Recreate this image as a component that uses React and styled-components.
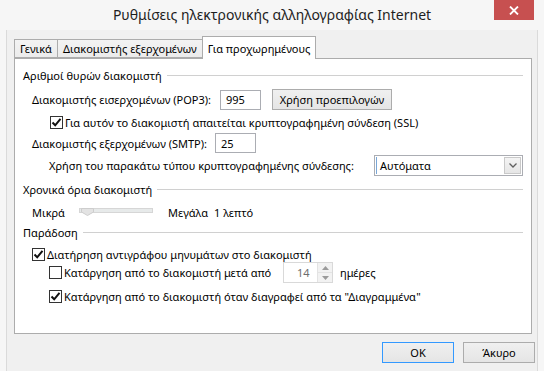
import React from 'react';
import styled, { createGlobalStyle } from 'styled-components';

const GlobalStyle = createGlobalStyle`
  html, body { margin: 0; padding: 0; }
  body {
    font-family: "Noto Sans", "Liberation Sans", sans-serif;
    font-size: 11px;
    color: #000;
    background: #f4f4f4;
  }
  * { box-sizing: border-box; }
`;

const Window = styled.div`
  width: 544px;
  height: 371px;
  display: flex;
  flex-direction: column;
  background: #f6f6f6;
  overflow: hidden;
`;

const TitleBar = styled.div`
  height: 30px;
  flex: none;
  display: grid;
  grid-template-columns: 1fr auto 1fr;
  align-items: center;
`;

const Title = styled.div`
  grid-column: 2;
  font-size: 14px;
  color: #1e1e1e;
  padding-bottom: 2px;
`;

const CloseButton = styled.div`
  grid-column: 3;
  justify-self: end;
  align-self: start;
  width: 40px;
  height: 20px;
  margin-right: 10px;
  background: #c75050;
  display: flex;
  align-items: center;
  justify-content: center;
`;

const Client = styled.div`
  flex: 1;
  margin: 0 6px;
  border-left: 1px solid #dadada;
  border-right: 1px solid #dadada;
  background: #f0f0f0;
  display: flex;
  flex-direction: column;
  padding-top: 6px;
`;

const TabArea = styled.div`
  flex: 1;
  margin: 0 5px 0 7px;
  display: flex;
  flex-direction: column;
`;

const TabStrip = styled.div`
  height: 22px;
  display: flex;
  align-items: flex-end;
`;

const Tab = styled.div`
  height: ${p => (p.$active ? 23 : 19)}px;
  margin-bottom: ${p => (p.$active ? -1 : 0)}px;
  margin-left: -1px;
  padding: 0 5px;
  display: flex;
  align-items: center;
  border: 1px solid #acacac;
  border-bottom: ${p => (p.$active ? 'none' : '1px solid #acacac')};
  background: ${p => (p.$active ? '#fff' : 'linear-gradient(#f3f3f3, #ebebeb)')};
  position: relative;
  z-index: ${p => (p.$active ? 1 : 0)};
  white-space: nowrap;
  &:first-child { margin-left: 0; }
`;

const Panel = styled.div`
  flex: 1;
  background: #fff;
  border: 1px solid #acacac;
  padding: 8px 8px 0 8px;
  display: flex;
  flex-direction: column;
`;

const GroupHeader = styled.div`
  height: 16px;
  margin-top: ${p => p.$mt || 0}px;
  display: flex;
  align-items: center;
  gap: 5px;
  white-space: nowrap;
  &::after {
    content: '';
    flex: 1;
    height: 1px;
    background: #d0d0d0;
  }
`;

const Row = styled.div`
  height: ${p => p.$h || 16}px;
  margin-top: ${p => p.$mt || 0}px;
  padding-left: ${p => p.$indent || 0}px;
  display: flex;
  align-items: center;
  white-space: nowrap;
`;

const Label = styled.span`
  flex: none;
  width: ${p => (p.$w ? `${p.$w}px` : 'auto')};
  margin-right: ${p => p.$gap || 0}px;
`;

const TextBox = styled.div`
  width: ${p => p.$w}px;
  height: 20px;
  border: 1px solid #abadb3;
  background: #fff;
  padding-left: 5px;
  display: flex;
  align-items: center;
`;

const Button = styled.div`
  width: ${p => p.$w}px;
  height: 21px;
  margin-left: ${p => p.$ml || 0}px;
  border: 1px solid ${p => (p.$default ? '#3399ff' : '#acacac')};
  background: linear-gradient(#f0f0f0, #e5e5e5);
  display: flex;
  align-items: center;
  justify-content: center;
`;

const Select = styled.div`
  width: 150px;
  height: 21px;
  border: 1px solid #abadb3;
  background: #fff;
  display: flex;
  align-items: center;
  padding: 1px;
`;

const SelectValue = styled.div`
  flex: 1;
  height: 100%;
  display: flex;
  align-items: center;
  padding-left: 3px;
  border-left: 1px solid #7aa7d6;
`;

const SelectArrow = styled.div`
  width: 17px;
  height: 17px;
  border: 1px solid #c9c9c9;
  background: linear-gradient(#f4f4f4, #e6e6e6);
  display: flex;
  align-items: center;
  justify-content: center;
`;

const CheckBoxBox = styled.div`
  width: 13px;
  height: 13px;
  flex: none;
  border: 1px solid #333;
  background: #fff;
  margin-right: 2px;
  display: flex;
  align-items: center;
  justify-content: center;
`;

const SliderTrack = styled.div`
  position: relative;
  width: 74px;
  height: 5px;
  margin: 4px 15px 0 14px;
  background: #e7eaea;
  border: 1px solid #d6d6d6;
  align-self: flex-start;
`;

const SliderThumb = styled.svg`
  position: absolute;
  left: 1px;
  top: -1px;
`;

const Spin = styled.div`
  width: 50px;
  height: 21px;
  margin: 0 7px 0 11px;
  border: 1px solid #d9d9d9;
  background: #fff;
  display: flex;
  align-items: stretch;
`;

const SpinValue = styled.div`
  flex: 1;
  color: #6d6d6d;
  display: flex;
  align-items: center;
  padding-left: 13px;
`;

const SpinButtons = styled.div`
  width: 15px;
  display: flex;
  flex-direction: column;
  border-left: 1px solid #e3e3e3;
  background: #f2f2f2;
`;

const SpinHalf = styled.div`
  flex: 1;
  display: flex;
  align-items: center;
  justify-content: center;
  &:first-child { border-bottom: 1px solid #e3e3e3; }
`;

const Footer = styled.div`
  height: 37px;
  flex: none;
  display: flex;
  justify-content: flex-end;
  align-items: flex-start;
  gap: 9px;
  padding: 8px 2px 0 0;
`;

const Check = ({ checked }) => (
  <CheckBoxBox>
    {checked && (
      <svg width="11" height="11" viewBox="0 0 11 11">
        <path d="M1.5 5.5 L4.2 8.3 L9.5 1.8" fill="none" stroke="#111" strokeWidth="2" />
      </svg>
    )}
  </CheckBoxBox>
);

export default function App() {
  return (
    <>
      <GlobalStyle />
      <Window>
        <TitleBar>
          <Title>Ρυθμίσεις ηλεκτρονικής αλληλογραφίας Internet</Title>
          <CloseButton>
            <svg width="10" height="9" viewBox="0 0 10 9">
              <path d="M1 0.5 L9 8.5 M9 0.5 L1 8.5" stroke="#fff" strokeWidth="1.8" />
            </svg>
          </CloseButton>
        </TitleBar>
        <Client>
          <TabArea>
            <TabStrip>
              <Tab>Γενικά</Tab>
              <Tab>Διακομιστής εξερχομένων</Tab>
              <Tab $active>Για προχωρημένους</Tab>
            </TabStrip>
            <Panel>
              <GroupHeader>Αριθμοί θυρών διακομιστή</GroupHeader>
              <Row $mt={6} $h={21} $indent={9}>
                <Label $w={188}>Διακομιστής εισερχομένων (POP3):</Label>
                <TextBox $w={41}>995</TextBox>
                <Button $w={120} $ml={11}>Χρήση προεπιλογών</Button>
              </Row>
              <Row $mt={4} $indent={27}>
                <Check checked />
                <span>Για αυτόν το διακομιστή απαιτείται κρυπτογραφημένη σύνδεση (SSL)</span>
              </Row>
              <Row $mt={3} $h={20} $indent={9}>
                <Label $w={183}>Διακομιστής εξερχομένων (SMTP):</Label>
                <TextBox $w={41}>25</TextBox>
              </Row>
              <Row $mt={2} $h={21} $indent={26}>
                <Label $w={325}>Χρήση του παρακάτω τύπου κρυπτογραφημένης σύνδεσης:</Label>
                <Select>
                  <SelectValue>Αυτόματα</SelectValue>
                  <SelectArrow>
                    <svg width="8" height="5" viewBox="0 0 8 5">
                      <path d="M0.5 0.5 L4 4 L7.5 0.5" fill="none" stroke="#606060" strokeWidth="1.3" />
                    </svg>
                  </SelectArrow>
                </Select>
              </Row>
              <GroupHeader $mt={5}>Χρονικά όρια διακομιστή</GroupHeader>
              <Row $mt={7} $indent={9}>
                <Label $w={33}>Μικρά</Label>
                <SliderTrack>
                  <SliderThumb width="13" height="8" viewBox="0 0 13 8">
                    <path d="M0.5 0.5 H12.5 V4 L6.5 7.5 L0.5 4 Z" fill="#e3e3e3" stroke="#cdcdcd" />
                  </SliderThumb>
                </SliderTrack>
                <Label $w={46}>Μεγάλα</Label>
                <span>1 λεπτό</span>
              </Row>
              <GroupHeader $mt={4}>Παράδοση</GroupHeader>
              <Row $mt={6} $indent={9}>
                <Check checked />
                <span>Διατήρηση αντιγράφου μηνυμάτων στο διακομιστή</span>
              </Row>
              <Row $h={21} $indent={26}>
                <Check />
                <Label $w={208}>Κατάργηση από το διακομιστή μετά από</Label>
                <Spin>
                  <SpinValue>14</SpinValue>
                  <SpinButtons>
                    <SpinHalf>
                      <svg width="7" height="4" viewBox="0 0 7 4"><path d="M0 4 L3.5 0 L7 4 Z" fill="#9a9a9a" /></svg>
                    </SpinHalf>
                    <SpinHalf>
                      <svg width="7" height="4" viewBox="0 0 7 4"><path d="M0 0 L3.5 4 L7 0 Z" fill="#9a9a9a" /></svg>
                    </SpinHalf>
                  </SpinButtons>
                </Spin>
                <span>ημέρες</span>
              </Row>
              <Row $mt={5} $indent={26}>
                <Check checked />
                <span>Κατάργηση από το διακομιστή όταν διαγραφεί από τα "Διαγραμμένα"</span>
              </Row>
            </Panel>
          </TabArea>
          <Footer>
            <Button $w={72} $default>OK</Button>
            <Button $w={72}>Άκυρο</Button>
          </Footer>
        </Client>
      </Window>
    </>
  );
}
